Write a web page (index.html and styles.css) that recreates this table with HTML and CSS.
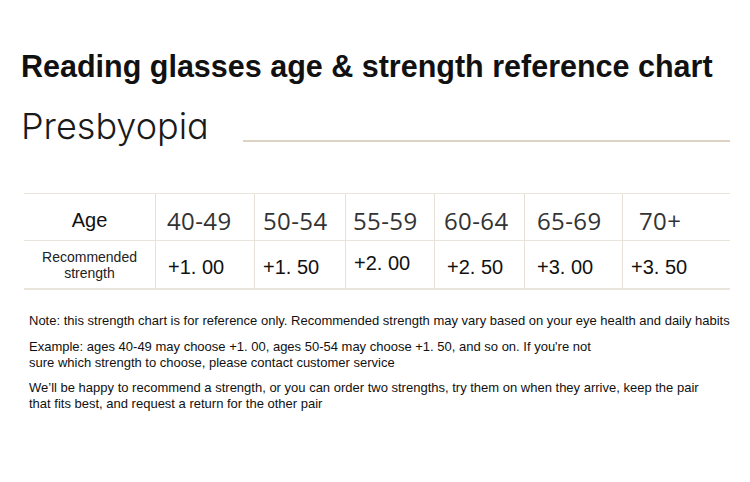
FILE: index.html
```html
<!DOCTYPE html>
<html>
<head>
<meta charset="utf-8">
<link rel="stylesheet" href="styles.css">
</head>
<body>
<div class="page">
  <h1 class="title">Reading glasses age &amp; strength reference chart</h1>
  <div class="brand">
    <span class="brand-name">Presbyopia</span>
    <span class="brand-rule"></span>
  </div>
  <div class="chart">
    <div class="cell label age">Age</div>
    <div class="cell head pl11">40-49</div>
    <div class="cell head pl8">50-54</div>
    <div class="cell head pl7">55-59</div>
    <div class="cell head pl9">60-64</div>
    <div class="cell head pl12">65-69</div>
    <div class="cell head pl16">70+</div>
    <div class="cell label rec">Recommended<br>strength</div>
    <div class="cell val pl12">+1. 00</div>
    <div class="cell val pl8">+1. 50</div>
    <div class="cell val pl8 raised">+2. 00</div>
    <div class="cell val pl12">+2. 50</div>
    <div class="cell val pl12">+3. 00</div>
    <div class="cell val pl8">+3. 50</div>
  </div>
  <div class="notes">
    <p class="note n1">Note: this strength chart is for reference only. Recommended strength may vary based on your eye health and daily habits</p>
    <p class="note n2">Example: ages 40-49 may choose +1. 00, ages 50-54 may choose +1. 50, and so on. If you're not<br>sure which strength to choose, please contact customer service</p>
    <p class="note n3">We’ll be happy to recommend a strength, or you can order two strengths, try them on when they arrive, keep the pair<br>that fits best, and request a return for the other pair</p>
  </div>
</div>
</body>
</html>
```

FILE: styles.css
```css
* { box-sizing: border-box; }
html, body { margin: 0; padding: 0; background: #ffffff; }
.page {
  width: 750px;
  height: 482px;
  padding-top: 49px;
  display: flex;
  flex-direction: column;
  font-family: "Liberation Sans", Arial, sans-serif;
  color: #111;
}
.title {
  margin: 0 0 0 21px;
  font-size: 30.5px;
  line-height: 34px;
  font-weight: bold;
  color: #111;
}
.brand {
  margin-top: 23px;
  padding-left: 21px;
  padding-right: 20px;
  display: flex;
  align-items: flex-end;
  height: 40px;
}
.brand-name {
  font-family: Inter, "Noto Sans", sans-serif;
  font-feature-settings: "cv11" 1;
  font-weight: 300;
  font-size: 36px;
  line-height: 40px;
  color: #1a1a1a;
}
.brand-rule {
  margin-left: auto;
  margin-bottom: 4px;
  width: 487px;
  height: 2px;
  background: #ddd3c3;
}
.chart {
  margin-top: 47px;
  margin-left: 24px;
  width: 706px;
  display: grid;
  grid-template-columns: 131px 99px 91px 89px 90px 98px 108px;
  grid-template-rows: 47px 47px;
  border-top: 1px solid #e9e5dd;
  border-bottom: 2px solid #e9e5dd;
}
.cell {
  display: flex;
  align-items: center;
  border-left: 1px solid #e6e2da;
}
.cell.label {
  border-left: none;
  justify-content: center;
  text-align: center;
}
.chart > .cell:nth-child(-n+7) { border-bottom: 1px solid #e9e5dd; }
.age {
  font-size: 20px;
  color: #111;
  padding-top: 6px;
}
.rec {
  font-size: 14px;
  line-height: 16px;
  color: #222;
}
.head {
  font-family: "Open Sans", "Noto Sans", sans-serif;
  font-size: 24px;
  letter-spacing: 0.4px;
  color: #333;
  padding-top: 6px;
}
.val {
  font-size: 20px;
  color: #111;
  padding-top: 5px;
}
.val.raised { padding-top: 0; padding-bottom: 3px; }
.pl7 { padding-left: 7px; }
.pl8 { padding-left: 8px; }
.pl9 { padding-left: 9px; }
.pl11 { padding-left: 11px; }
.pl12 { padding-left: 12px; }
.pl16 { padding-left: 16px; }
.notes {
  margin-top: 23px;
  padding-left: 29px;
}
.note {
  margin: 0;
  font-size: 13px;
  line-height: 16px;
  color: #111;
}
.n2 { margin-top: 10px; }
.n3 { margin-top: 9px; }
```
